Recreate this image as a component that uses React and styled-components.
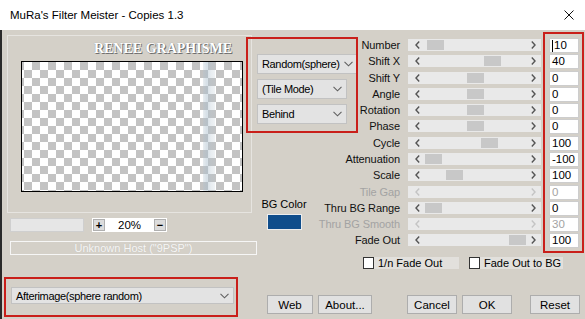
import React from "react";
import styled, { createGlobalStyle } from "styled-components";

const GlobalStyle = createGlobalStyle`
  html, body { margin: 0; padding: 0; background: #d4d0c8; }
  body {
    font-family: "Liberation Sans", Arial, sans-serif;
    font-size: 11px;
    color: #000;
  }
`;

const sliders = [
  { label: "Number", value: "10", pos: 0.024, caret: true },
  { label: "Shift X", value: "40", pos: 0.7 },
  { label: "Shift Y", value: "0", pos: 0.5 },
  { label: "Angle", value: "0", pos: 0.5 },
  { label: "Rotation", value: "0", pos: 0.5 },
  { label: "Phase", value: "0", pos: 0.5 },
  { label: "Cycle", value: "100", pos: 0.667 },
  { label: "Attenuation", value: "-100", pos: 0 },
  { label: "Scale", value: "100", pos: 0.25 },
  { label: "Tile Gap", value: "0", disabled: true },
  { label: "Thru BG Range", value: "0", pos: 0 },
  { label: "Thru BG Smooth", value: "30", disabled: true },
  { label: "Fade Out", value: "100", pos: 1 },
];

const Chevron = ({ color = "#606060" }) => (
  <svg width="9" height="6" viewBox="0 0 9 6">
    <polyline points="0.5,0.8 4.5,4.8 8.5,0.8" fill="none" stroke={color} strokeWidth="1.1" />
  </svg>
);

const Arrow = ({ dir, color }) => (
  <svg width="5" height="8" viewBox="0 0 5 8">
    <polyline
      points={dir === "left" ? "4.2,0.6 1,4 4.2,7.4" : "0.8,0.6 4,4 0.8,7.4"}
      fill="none"
      stroke={color}
      strokeWidth="1.4"
    />
  </svg>
);

export default function App() {
  return (
    <>
      <GlobalStyle />
      <Window>
        <TitleBar>
          <span>MuRa's Filter Meister - Copies 1.3</span>
          <svg width="10" height="10" viewBox="0 0 10 10">
            <path d="M0.5 0.5 L9.5 9.5 M9.5 0.5 L0.5 9.5" stroke="#111" strokeWidth="1" />
          </svg>
        </TitleBar>
        <Body>
          <TopSection>
            <LeftCol>
              <PreviewFrame>
                <Brand>RENEE GRAPHISME</Brand>
                <Checker />
              </PreviewFrame>
              <ZoomRow>
                <Progress />
                <ZoomBox>
                  <ZoomBtn>+</ZoomBtn>
                  <span>20%</span>
                  <ZoomBtn>−</ZoomBtn>
                </ZoomBox>
              </ZoomRow>
              <HostBox>Unknown Host ("9PSP")</HostBox>
            </LeftCol>

            <MidCol>
              <Combo $w={101}>
                <span>Random(sphere)</span>
                <Chevron />
              </Combo>
              <Combo $w={90}>
                <span>(Tile Mode)</span>
                <Chevron />
              </Combo>
              <Combo $w={90}>
                <span>Behind</span>
                <Chevron />
              </Combo>
              <BgBlock>
                <span>BG Color</span>
                <Swatch />
              </BgBlock>
            </MidCol>

            <RightCol>
              <SliderGrid>
                {sliders.map((s) => (
                  <React.Fragment key={s.label}>
                    <Label $disabled={s.disabled}>{s.label}</Label>
                    <Track>
                      <Arrow dir="left" color={s.disabled ? "#c4c4c4" : "#555"} />
                      <Arrow dir="right" color={s.disabled ? "#c4c4c4" : "#555"} />
                      {!s.disabled && <Thumb style={{ left: Math.round(17 + s.pos * 84) }} />}
                    </Track>
                    <ValueBox $disabled={s.disabled}>
                      {s.caret && <Caret />}
                      {s.value}
                    </ValueBox>
                  </React.Fragment>
                ))}
              </SliderGrid>
              <CheckRow>
                <CheckItem>
                  <Box />
                  <CheckLabel $w={85}>1/n Fade Out</CheckLabel>
                </CheckItem>
                <CheckItem>
                  <Box />
                  <CheckLabel $w={83}>Fade Out to BG</CheckLabel>
                </CheckItem>
              </CheckRow>
            </RightCol>
          </TopSection>

          <BottomSection>
            <Combo $w={223} $h={17} $mt={14} $ml={9}>
              <span>Afterimage(sphere random)</span>
              <Chevron />
            </Combo>
            <ButtonRow>
              <Button $w={46}>Web</Button>
              <Button $w={54} $ml={5}>About...</Button>
              <Button $w={50} $ml={35}>Cancel</Button>
              <Button $w={50} $ml={5}>OK</Button>
              <Button $w={50} $ml={18}>Reset</Button>
            </ButtonRow>
          </BottomSection>
        </Body>

        <RedMark $x={246} $y={37} $w={112} $h={96} />
        <RedMark $x={543} $y={32} $w={41} $h={221} />
        <RedMark $x={4} $y={277} $w={234} $h={40} />
      </Window>
    </>
  );
}

const Window = styled.div`
  position: relative;
  width: 585px;
  height: 319px;
  overflow: hidden;
  background: #d4d0c8;
`;

const TitleBar = styled.div`
  height: 30px;
  background: #fff;
  display: flex;
  align-items: center;
  justify-content: space-between;
  padding: 0 11px 1px 10px;
  box-sizing: border-box;
  font-size: 11.5px;
  color: #000;
`;

const Body = styled.div`
  height: 289px;
  border-left: 2px solid #2a2a2a;
  box-sizing: border-box;
  display: flex;
  flex-direction: column;
`;

const TopSection = styled.div`
  display: flex;
  height: 243px;
  flex-shrink: 0;
`;

const LeftCol = styled.div`
  width: 255px;
  flex-shrink: 0;
  display: flex;
  flex-direction: column;
`;

const PreviewFrame = styled.div`
  margin: 5px 0 0 5px;
  width: 245px;
  height: 178px;
  box-sizing: border-box;
  border: 1px solid #e6e4e0;
  padding: 5px 9px 0 13px;
  display: flex;
  flex-direction: column;
`;

const Brand = styled.div`
  height: 20px;
  line-height: 15px;
  padding-right: 10px;
  text-align: right;
  font-family: "Liberation Serif", "Times New Roman", serif;
  font-weight: bold;
  font-size: 14px;
  color: #fff;
  text-shadow: 1px 1px 0 #6e6e6e, 0 0 1px #8a8a8a;
`;

const Checker = styled.div`
  width: 222px;
  height: 131px;
  box-sizing: border-box;
  border: 1px solid #000;
  background-color: #fff;
  background-image:
    linear-gradient(90deg, transparent 181px, rgba(180, 196, 208, 0.3) 181px,
      rgba(170, 190, 205, 0.5) 185px, rgba(180, 196, 208, 0.3) 189px,
      rgba(180, 196, 208, 0.2) 193px, transparent 193px),
    conic-gradient(#c3c3c3 25%, #fff 0 50%, #c3c3c3 0 75%, #fff 0);
  background-size: 100% 100%, 16px 16px;
  background-position: 0 0, 2px 0;
`;

const ZoomRow = styled.div`
  margin: 5px 0 0 8px;
  display: flex;
  gap: 8px;
  height: 14px;
`;

const Progress = styled.div`
  width: 74px;
  height: 14px;
  box-sizing: border-box;
  background: #e6e6e6;
  border: 1px solid #cfcfcf;
`;

const ZoomBox = styled.div`
  width: 75px;
  height: 14px;
  box-sizing: border-box;
  background: #fff;
  display: flex;
  align-items: center;
  justify-content: space-between;
  padding: 0 1px;
  font-size: 11.5px;
`;

const ZoomBtn = styled.span`
  width: 12px;
  height: 12px;
  box-sizing: border-box;
  background: #dcdcdc;
  border: 1px solid #b0b0b0;
  display: flex;
  align-items: center;
  justify-content: center;
  font-weight: bold;
  font-size: 11px;
  line-height: 1;
`;

const HostBox = styled.div`
  margin: 9px 0 0 8px;
  width: 247px;
  height: 14px;
  box-sizing: border-box;
  border: 1px solid #f6f6f6;
  color: #f6f6f6;
  text-align: center;
  line-height: 12px;
  text-shadow: 0 0 1px #c0bdb6;
`;

const MidCol = styled.div`
  width: 57px;
  flex-shrink: 0;
  display: flex;
  flex-direction: column;
  gap: 5px;
  padding-top: 24px;
`;

const Combo = styled.div`
  width: ${(p) => p.$w}px;
  height: ${(p) => p.$h || 20}px;
  margin-top: ${(p) => p.$mt || 0}px;
  margin-left: ${(p) => p.$ml || 0}px;
  flex-shrink: 0;
  box-sizing: border-box;
  background: #e3e3e3;
  border: 1px solid #c2c2c2;
  display: flex;
  align-items: center;
  justify-content: space-between;
  padding: 0 4px 0 4px;
  font-size: 11px;
  letter-spacing: -0.35px;
  white-space: nowrap;
`;

const BgBlock = styled.div`
  margin: 69px 0 0 6px;
  width: 42px;
  display: flex;
  flex-direction: column;
  align-items: center;
  gap: 4px;
  line-height: 12px;
  white-space: nowrap;
`;

const Swatch = styled.div`
  width: 35px;
  height: 16px;
  box-sizing: border-box;
  background: #0f4d8b;
  border: 1px solid #ededed;
`;

const RightCol = styled.div`
  flex: 1;
  padding-top: 7px;
  display: flex;
  flex-direction: column;
`;

const SliderGrid = styled.div`
  display: grid;
  grid-template-columns: 86px 133px 30px;
  grid-template-rows: 16px 17px 16px 16px 16px 17px 16px 16px 17px 16px 16px 16px 16px;
  column-gap: 8px;
  align-items: start;
`;

const Label = styled.div`
  height: 16px;
  line-height: 16px;
  text-align: right;
  white-space: nowrap;
  letter-spacing: -0.1px;
  color: ${(p) => (p.$disabled ? "#a3a3a3" : "#111")};
`;

const Track = styled.div`
  position: relative;
  margin-top: 2px;
  height: 12px;
  background: #e9e9e9;
  display: flex;
  align-items: center;
  justify-content: space-between;
  padding: 0 5px 0 7px;
`;

const Thumb = styled.div`
  position: absolute;
  top: 1px;
  width: 17px;
  height: 10px;
  background: #c8c8c8;
`;

const ValueBox = styled.div`
  margin-top: 1px;
  height: 15px;
  box-sizing: border-box;
  background: #fff;
  border: 1px solid #cdcdcd;
  padding-left: 2px;
  line-height: 13px;
  font-size: 11.5px;
  display: flex;
  align-items: center;
  color: ${(p) => (p.$disabled ? "#a3a3a3" : "#000")};
`;

const Caret = styled.span`
  display: inline-block;
  width: 1px;
  height: 12px;
  background: #000;
  margin-right: 1px;
`;

const CheckRow = styled.div`
  margin: 9px 0 0 49px;
  display: flex;
  gap: 10px;
`;

const CheckItem = styled.div`
  display: flex;
  align-items: center;
`;

const Box = styled.span`
  width: 11px;
  height: 12px;
  box-sizing: border-box;
  background: #fff;
  border: 1px solid #333;
`;

const CheckLabel = styled.span`
  width: ${(p) => p.$w}px;
  height: 12px;
  box-sizing: border-box;
  padding-left: 4px;
  background: #e2e0dc;
  line-height: 12px;
  white-space: nowrap;
`;

const BottomSection = styled.div`
  display: flex;
  align-items: flex-start;
  flex: 1;
`;

const ButtonRow = styled.div`
  margin: 22px 0 0 33px;
  display: flex;
`;

const Button = styled.div`
  width: ${(p) => p.$w}px;
  height: 19px;
  margin-left: ${(p) => p.$ml || 0}px;
  box-sizing: border-box;
  background: #e1e1e1;
  border: 1px solid #adadad;
  display: flex;
  align-items: center;
  justify-content: center;
  font-size: 11.5px;
`;

const RedMark = styled.div`
  position: absolute;
  left: ${(p) => p.$x}px;
  top: ${(p) => p.$y}px;
  width: ${(p) => p.$w}px;
  height: ${(p) => p.$h}px;
  box-sizing: border-box;
  border: 2px solid #c91f1a;
  pointer-events: none;
`;
